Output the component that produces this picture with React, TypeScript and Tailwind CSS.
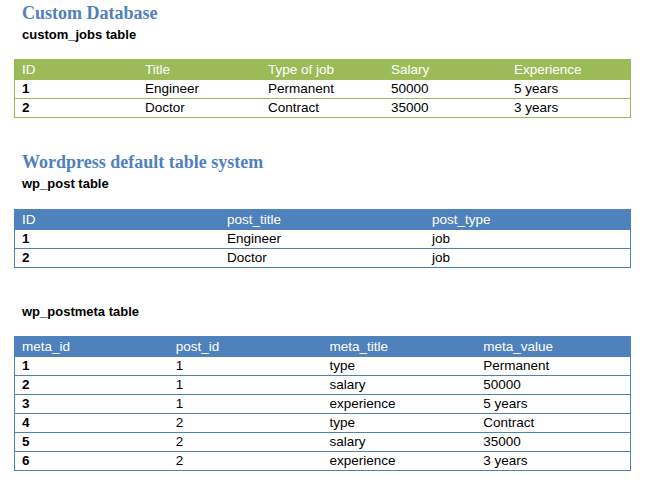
import React from 'react';

type TableProps = {
  color: string;
  columns: string[];
  rows: string[][];
};

const green = { border: 'border-[#9bbb59]', head: 'bg-[#9bbb59]', line: 'border-[#9bbb59]' };
const blue = { border: 'border-[#4f81bd]', head: 'bg-[#4f81bd]', line: 'border-[#4f81bd]' };

function DataTable({ color, columns, rows }: TableProps) {
  const theme = color === 'green' ? green : blue;
  const cols =
    columns.length === 5 ? 'grid-cols-5' : columns.length === 4 ? 'grid-cols-4' : 'grid-cols-3';

  return (
    <div className={`ml-[14px] w-[617px] border ${theme.border} text-[13.5px]`}>
      {/* header */}
      <div className={`grid ${cols} h-[19px] ${theme.head} text-white leading-[19px]`}>
        {columns.map((c) => (
          <div key={c} className="pl-[7px]">{c}</div>
        ))}
      </div>
      {rows.map((r, i) => (
        <div key={i} className={`grid ${cols} h-[19px] border-t ${theme.line} leading-[18px] text-black`}>
          {r.map((cell, j) => (
            <div key={j} className={`pl-[7px] ${j === 0 ? 'font-bold' : ''}`}>{cell}</div>
          ))}
        </div>
      ))}
    </div>
  );
}

export default function App() {
  const heading = "ml-[22px] text-[18px] leading-[20px] font-bold text-[#4f81bd] font-['Liberation_Serif',serif]";
  const sub = 'ml-[22px] text-[13px] leading-[16px] font-bold text-black';

  return (
    <div className="w-[655px] h-[499px] bg-white font-['Liberation_Sans',Arial,sans-serif] text-[13px] overflow-hidden">
      <div className="pt-[3px]">
        <h1 className={heading}>Custom Database</h1>
        <div className={`${sub} mt-[4px] mb-[16px]`}>custom_jobs table</div>
        <DataTable
          color="green"
          columns={['ID', 'Title', 'Type of job', 'Salary', 'Experience']}
          rows={[
            ['1', 'Engineer', 'Permanent', '50000', '5 years'],
            ['2', 'Doctor', 'Contract', '35000', '3 years'],
          ]}
        />

        <h2 className={`${heading} mt-[34px]`}>Wordpress default table system</h2>
        <div className={`${sub} mt-[4px] mb-[17px]`}>wp_post table</div>
        <DataTable
          color="blue"
          columns={['ID', 'post_title', 'post_type']}
          rows={[
            ['1', 'Engineer', 'job'],
            ['2', 'Doctor', 'job'],
          ]}
        />

        <div className={`${sub} mt-[36px] mb-[16px]`}>wp_postmeta table</div>
        <DataTable
          color="blue"
          columns={['meta_id', 'post_id', 'meta_title', 'meta_value']}
          rows={[
            ['1', '1', 'type', 'Permanent'],
            ['2', '1', 'salary', '50000'],
            ['3', '1', 'experience', '5 years'],
            ['4', '2', 'type', 'Contract'],
            ['5', '2', 'salary', '35000'],
            ['6', '2', 'experience', '3 years'],
          ]}
        />
      </div>
    </div>
  );
}
